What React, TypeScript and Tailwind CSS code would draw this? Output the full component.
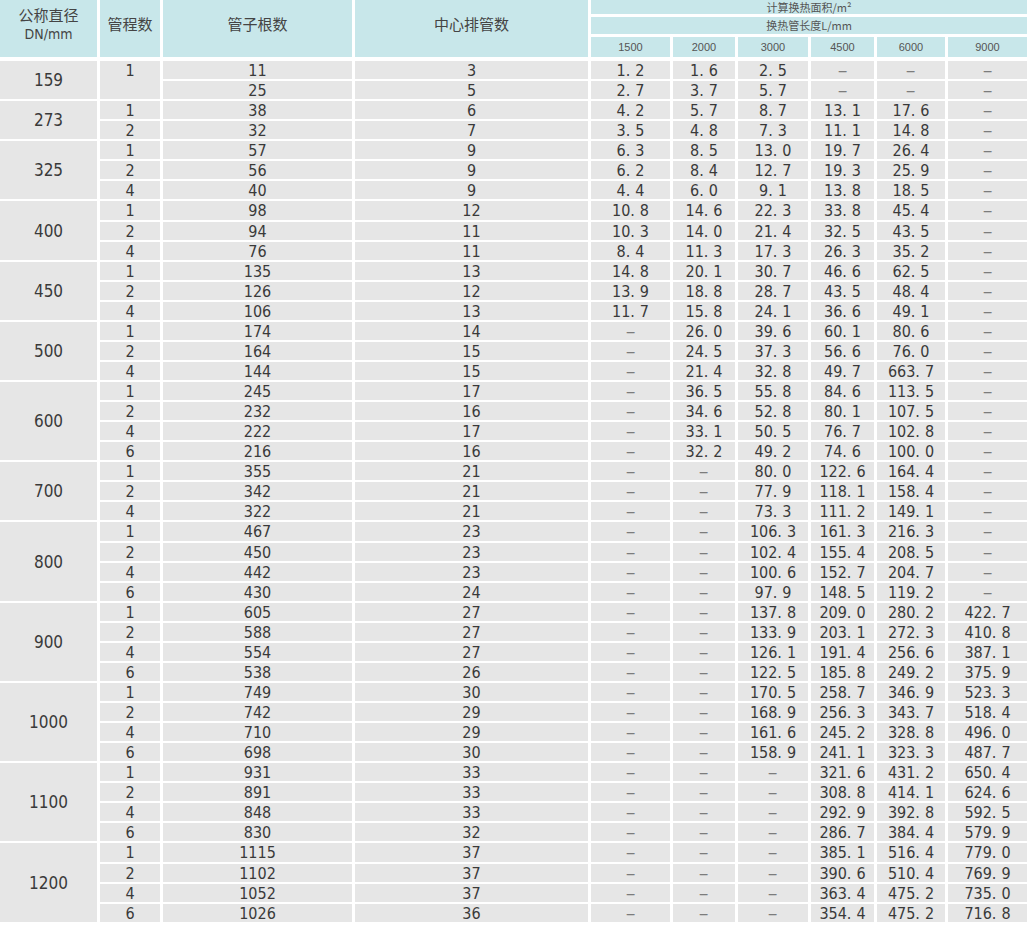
import React from "react";

type Row = string[];
type Group = { dn: string; rows: Row[]; mergedPass?: boolean };

const groups: Group[] = [
  {
    dn: "159",
    mergedPass: true,
    rows: [
      ["1", "11", "3", "1.2", "1.6", "2.5", "-", "-", "-"],
      ["", "25", "5", "2.7", "3.7", "5.7", "-", "-", "-"],
    ],
  },
  {
    dn: "273",
    rows: [
      ["1", "38", "6", "4.2", "5.7", "8.7", "13.1", "17.6", "-"],
      ["2", "32", "7", "3.5", "4.8", "7.3", "11.1", "14.8", "-"],
    ],
  },
  {
    dn: "325",
    rows: [
      ["1", "57", "9", "6.3", "8.5", "13.0", "19.7", "26.4", "-"],
      ["2", "56", "9", "6.2", "8.4", "12.7", "19.3", "25.9", "-"],
      ["4", "40", "9", "4.4", "6.0", "9.1", "13.8", "18.5", "-"],
    ],
  },
  {
    dn: "400",
    rows: [
      ["1", "98", "12", "10.8", "14.6", "22.3", "33.8", "45.4", "-"],
      ["2", "94", "11", "10.3", "14.0", "21.4", "32.5", "43.5", "-"],
      ["4", "76", "11", "8.4", "11.3", "17.3", "26.3", "35.2", "-"],
    ],
  },
  {
    dn: "450",
    rows: [
      ["1", "135", "13", "14.8", "20.1", "30.7", "46.6", "62.5", "-"],
      ["2", "126", "12", "13.9", "18.8", "28.7", "43.5", "48.4", "-"],
      ["4", "106", "13", "11.7", "15.8", "24.1", "36.6", "49.1", "-"],
    ],
  },
  {
    dn: "500",
    rows: [
      ["1", "174", "14", "-", "26.0", "39.6", "60.1", "80.6", "-"],
      ["2", "164", "15", "-", "24.5", "37.3", "56.6", "76.0", "-"],
      ["4", "144", "15", "-", "21.4", "32.8", "49.7", "663.7", "-"],
    ],
  },
  {
    dn: "600",
    rows: [
      ["1", "245", "17", "-", "36.5", "55.8", "84.6", "113.5", "-"],
      ["2", "232", "16", "-", "34.6", "52.8", "80.1", "107.5", "-"],
      ["4", "222", "17", "-", "33.1", "50.5", "76.7", "102.8", "-"],
      ["6", "216", "16", "-", "32.2", "49.2", "74.6", "100.0", "-"],
    ],
  },
  {
    dn: "700",
    rows: [
      ["1", "355", "21", "-", "-", "80.0", "122.6", "164.4", "-"],
      ["2", "342", "21", "-", "-", "77.9", "118.1", "158.4", "-"],
      ["4", "322", "21", "-", "-", "73.3", "111.2", "149.1", "-"],
    ],
  },
  {
    dn: "800",
    rows: [
      ["1", "467", "23", "-", "-", "106.3", "161.3", "216.3", "-"],
      ["2", "450", "23", "-", "-", "102.4", "155.4", "208.5", "-"],
      ["4", "442", "23", "-", "-", "100.6", "152.7", "204.7", "-"],
      ["6", "430", "24", "-", "-", "97.9", "148.5", "119.2", "-"],
    ],
  },
  {
    dn: "900",
    rows: [
      ["1", "605", "27", "-", "-", "137.8", "209.0", "280.2", "422.7"],
      ["2", "588", "27", "-", "-", "133.9", "203.1", "272.3", "410.8"],
      ["4", "554", "27", "-", "-", "126.1", "191.4", "256.6", "387.1"],
      ["6", "538", "26", "-", "-", "122.5", "185.8", "249.2", "375.9"],
    ],
  },
  {
    dn: "1000",
    rows: [
      ["1", "749", "30", "-", "-", "170.5", "258.7", "346.9", "523.3"],
      ["2", "742", "29", "-", "-", "168.9", "256.3", "343.7", "518.4"],
      ["4", "710", "29", "-", "-", "161.6", "245.2", "328.8", "496.0"],
      ["6", "698", "30", "-", "-", "158.9", "241.1", "323.3", "487.7"],
    ],
  },
  {
    dn: "1100",
    rows: [
      ["1", "931", "33", "-", "-", "-", "321.6", "431.2", "650.4"],
      ["2", "891", "33", "-", "-", "-", "308.8", "414.1", "624.6"],
      ["4", "848", "33", "-", "-", "-", "292.9", "392.8", "592.5"],
      ["6", "830", "32", "-", "-", "-", "286.7", "384.4", "579.9"],
    ],
  },
  {
    dn: "1200",
    rows: [
      ["1", "1115", "37", "-", "-", "-", "385.1", "516.4", "779.0"],
      ["2", "1102", "37", "-", "-", "-", "390.6", "510.4", "769.9"],
      ["4", "1052", "37", "-", "-", "-", "363.4", "475.2", "735.0"],
      ["6", "1026", "36", "-", "-", "-", "354.4", "475.2", "716.8"],
    ],
  },
];

const lengths = ["1500", "2000", "3000", "4500", "6000", "9000"];

const COL = [
  "col-start-1",
  "col-start-2",
  "col-start-3",
  "col-start-4",
  "col-start-5",
  "col-start-6",
  "col-start-7",
  "col-start-8",
  "col-start-9",
  "col-start-10",
];

const SPAN: Record<number, string> = {
  2: "row-span-2",
  3: "row-span-3",
  4: "row-span-4",
};

const gridCols =
  "grid grid-cols-[97px_60px_189px_233px_79px_62px_70px_63px_68px_79px] gap-x-[3px]";

const narrow = "font-['Liberation_Sans_Narrow','DejaVu_Sans_Condensed','Liberation_Sans',sans-serif]";
const cjk = "font-['Noto_Sans_CJK_SC','Noto_Sans',sans-serif]";

function Value({ v }: { v: string }) {
  if (v === "-") return <span className="inline-block scale-x-[1.35] text-[#7c7c7c]">–</span>;
  const i = v.indexOf(".");
  if (i < 0) return <>{v}</>;
  return (
    <>
      {v.slice(0, i)}
      <span className="mr-[5px]">.</span>
      {v.slice(i + 1)}
    </>
  );
}

export default function App() {
  return (
    <div className={`w-[1027px] h-[925px] bg-white text-[#3a3a3a] ${narrow}`}>
      {/* header */}
      <div className={`${gridCols} grid-rows-[14px_17px_20px] gap-y-[3px] bg-white`}>
        <div className="col-start-1 row-span-3 bg-[#c8e7ea] flex flex-col items-center pt-[6px]">
          <span className={`${cjk} text-[15px] leading-[17px] text-[#444]`}>公称直径</span>
          <span className="mt-[4px] text-[14px] leading-[14px] text-[#444]">DN/mm</span>
        </div>
        <div className={`col-start-2 row-span-3 bg-[#c8e7ea] flex justify-center pt-[16px] ${cjk} text-[15px] leading-[16px] text-[#444]`}>
          管程数
        </div>
        <div className={`col-start-3 row-span-3 bg-[#c8e7ea] flex justify-center pt-[16px] ${cjk} text-[15px] leading-[16px] text-[#444]`}>
          管子根数
        </div>
        <div className={`col-start-4 row-span-3 bg-[#c8e7ea] flex justify-center pt-[16px] ${cjk} text-[15px] leading-[16px] text-[#444]`}>
          中心排管数
        </div>
        <div className={`col-start-5 col-span-6 row-start-1 bg-[#c8e7ea] flex items-center justify-center ${cjk} text-[11px] leading-none text-[#555]`}>
          计算换热面积/m²
        </div>
        <div className={`col-start-5 col-span-6 row-start-2 bg-[#c8e7ea] flex items-center justify-center ${cjk} text-[11px] leading-none text-[#555]`}>
          换热管长度L/mm
        </div>
        {lengths.map((l, i) => (
          <div
            key={l}
            className={`${COL[i + 4]} row-start-3 bg-[#c8e7ea] flex items-center justify-center font-['Liberation_Sans',sans-serif] text-[11px] leading-none text-[#555]`}
          >
            {l}
          </div>
        ))}
      </div>

      {/* body */}
      <div className={`${gridCols} auto-rows-[18.07px] gap-y-[2px] mt-[4px]`}>
        {groups.map((g) => (
          <React.Fragment key={g.dn}>
            <div className={`${COL[0]} ${SPAN[g.rows.length]} bg-[#e6e6e6] flex items-center justify-center pt-[1px] text-[17px] leading-none`}>
              {g.dn}
            </div>
            {g.rows.map((r, ri) =>
              r.map((v, ci) => {
                if (ci === 0 && g.mergedPass) {
                  if (ri > 0) return null;
                  return (
                    <div
                      key={`${g.dn}-${ri}-${ci}`}
                      className={`${COL[1]} ${SPAN[g.rows.length]} bg-[#e6e6e6] flex justify-center pt-[2px] text-[16px] leading-[16px]`}
                    >
                      {v}
                    </div>
                  );
                }
                return (
                  <div
                    key={`${g.dn}-${ri}-${ci}`}
                    className={`${COL[ci + 1]} bg-[#e6e6e6] flex items-center justify-center pt-[2px] text-[16px] leading-none`}
                  >
                    <Value v={v} />
                  </div>
                );
              })
            )}
          </React.Fragment>
        ))}
      </div>
    </div>
  );
}
